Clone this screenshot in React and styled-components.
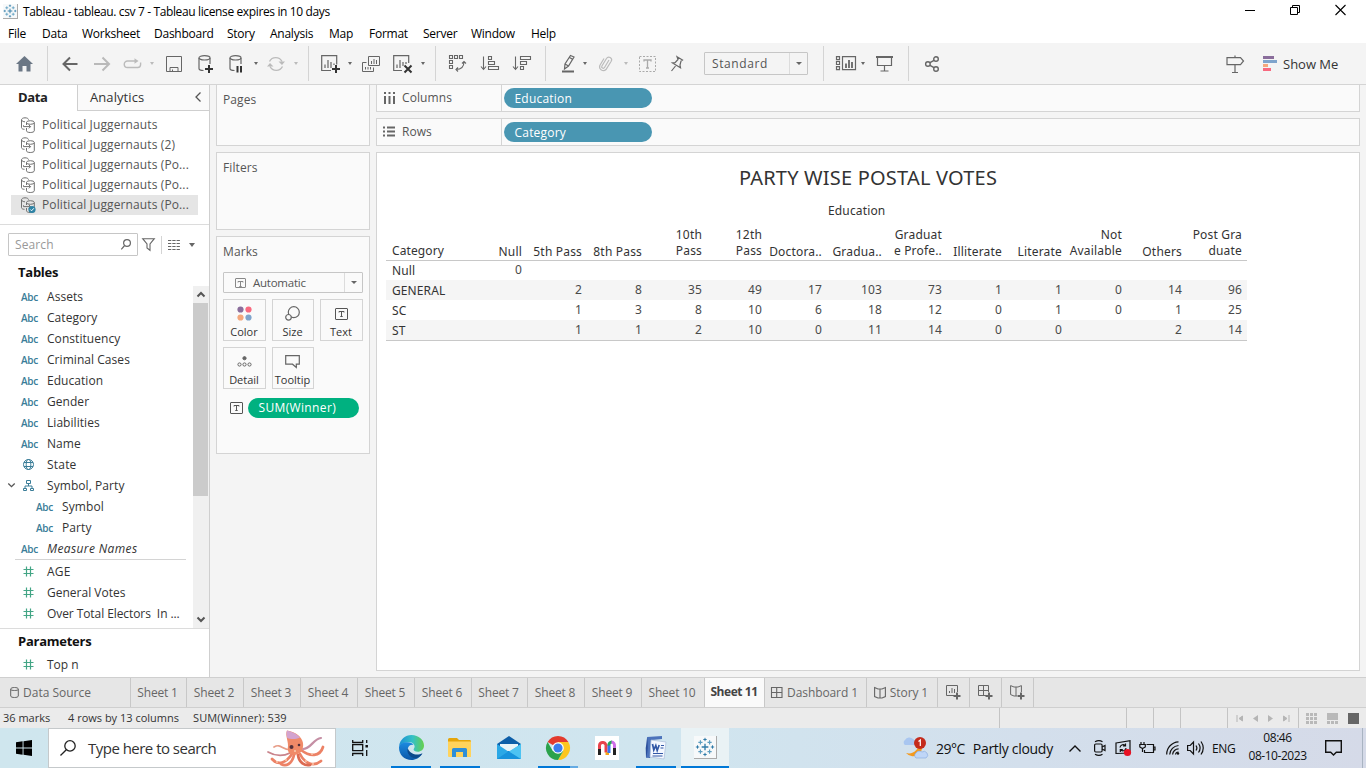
import React from "react";
import styled, { createGlobalStyle } from "styled-components";

const Global = createGlobalStyle`
  *, *::before, *::after { box-sizing: border-box; }
  html, body { margin: 0; padding: 0; width: 1366px; height: 768px; overflow: hidden; background: #fff; }
  body { font-family: "Open Sans", "Noto Sans", sans-serif; font-size: 12px; color: #333; }
  svg { display: block; flex: none; overflow: visible; }
`;

/* ---------- shared ---------- */
const Screen = styled.div`
  width: 1366px;
  height: 768px;
  display: flex;
  flex-direction: column;
  background: #fff;
`;
const Label = styled.span`
  white-space: pre;
  flex: none;
  letter-spacing: ${(p) => p.$ls || 0}px;
`;
const Slot = styled.span`
  flex: none;
  display: flex;
  align-items: center;
  margin-left: ${(p) => p.$gap || 0}px;
`;
const Caret = styled.i`
  flex: none;
  width: 0;
  height: 0;
  border: ${(p) => p.$s || 2.5}px solid transparent;
  border-bottom-width: 0;
  border-top: ${(p) => (p.$s || 2.5) + 0.5}px solid ${(p) => p.$c || "#666"};
  margin-left: ${(p) => p.$gap || 0}px;
`;
const Icon = ({ w = 16, h = 16, c = "#666", sw = 1.2, fill = "none", children }) => (
  <svg width={w} height={h} viewBox={`0 0 ${w} ${h}`} fill={fill} stroke={c} strokeWidth={sw}>
    {children}
  </svg>
);

/* ---------- window bars ---------- */
const TitleBar = styled.header`
  height: 23px;
  flex: none;
  display: flex;
  align-items: center;
  padding: 0 20px 0 3px;
  color: #000;
`;
const TitleText = styled(Label)`
  margin-left: 5px;
  flex: 1;
`;
const WindowButtons = styled.div`
  display: flex;
  align-items: center;
  gap: 35px;
  margin-top: -3px;
`;
const MenuBar = styled.nav`
  height: 20px;
  flex: none;
  display: flex;
  align-items: center;
  padding-left: 8px;
  color: #000;
`;
const MenuItem = styled.span`
  width: ${(p) => p.$w}px;
  flex: none;
  letter-spacing: -0.25px;
`;
const Toolbar = styled.div`
  height: 42px;
  flex: none;
  display: flex;
  align-items: center;
  background: #f4f4f4;
  border-bottom: 1px solid #d4d4d4;
`;
const Separator = styled.i`
  width: 1px;
  height: 35px;
  flex: none;
  background: #d4d4d4;
  margin-left: ${(p) => p.$gap}px;
`;
const Select = styled.div`
  width: ${(p) => p.$w}px;
  height: ${(p) => p.$h}px;
  margin-left: ${(p) => p.$gap || 0}px;
  flex: none;
  display: flex;
  align-items: center;
  background: ${(p) => p.$bg || "#f4f4f4"};
  border: 1px solid #c6c6c6;
  border-radius: 1px;
  color: #555;
`;
const SelectValue = styled.span`
  flex: 1;
  display: flex;
  align-items: center;
  gap: 7px;
  padding-left: ${(p) => p.$pad}px;
  letter-spacing: ${(p) => p.$ls || 0}px;
`;
const SelectArrow = styled.span`
  width: 18px;
  align-self: stretch;
  display: flex;
  align-items: center;
  justify-content: center;
  border-left: 1px solid #dcdcdc;
`;

const TableauMark = ({ size = 15 }) => (
  <svg width={size} height={size} viewBox="0 0 24 24" stroke="#2f7ba8" strokeWidth="1.4" fill="none">
    <path d="M12 8v8M8 12h8" strokeWidth="1.6" />
    <path d="M12 1v4M10 3h4M12 19v4M10 21h4M3 10v4M1 12h4M21 10v4M19 12h4" strokeWidth="1.2" />
    <path d="M6.500 4v5M4 6.500h5M17.500 4v5M15 6.500h5M6.500 15v5M4 17.500h5M17.500 15v5M15 17.500h5" stroke="#5b9dc0" />
  </svg>
);
const AppMark = styled.span`
  width: ${(p) => p.$s}px;
  height: ${(p) => p.$s}px;
  display: flex;
  align-items: center;
  justify-content: center;
  background: #f7f9fa;
  border-right: 1px solid #aaa;
  border-bottom: 1px solid #aaa;
`;

const TextMark = ({ w = 13, h = 12, c = "#555" }) => (
  <Icon w={w} h={h} c={c} sw={1}>
    <rect x=".5" y=".5" width={w - 1} height={h - 1} rx=".5" />
    <path d={`M${w / 2 - 2.5} 4.5v-1h5v1M${w / 2} 3.5v5M${w / 2 - 1.2} 8.5h2.4`} />
  </Icon>
);

/* ---------- left data pane ---------- */
const Body = styled.main`
  height: 592px;
  flex: none;
  display: flex;
  background: #f4f4f4;
`;
const DataPane = styled.aside`
  width: 210px;
  flex: none;
  display: flex;
  flex-direction: column;
  background: #fff;
  border-right: 1px solid #cfcfcf;
`;
const PaneTabs = styled.div`
  height: 26px;
  flex: none;
  display: flex;
  font-size: 13px;
`;
const DataTab = styled.div`
  width: 77px;
  padding: 3px 0 0 18px;
  font-weight: 700;
  color: #222;
  letter-spacing: -0.4px;
`;
const AnalyticsTab = styled.div`
  flex: 1;
  display: flex;
  align-items: center;
  justify-content: space-between;
  padding: 0 8px 2px 12px;
  background: #fafafa;
  border-left: 1px solid #cfcfcf;
  border-bottom: 1px solid #cfcfcf;
  color: #333;
`;
const Sources = styled.div`
  height: 114px;
  flex: none;
  padding: 4px 11px 0;
  border-bottom: 1px solid #dcdcdc;
`;
const Source = styled.div`
  height: 20px;
  display: flex;
  align-items: center;
  gap: 6px;
  padding: 0 0 1px 9px;
  color: #555;
  background: ${(p) => (p.$on ? "#e5e5e5" : "transparent")};
`;
const SearchRow = styled.div`
  height: 39px;
  flex: none;
  display: flex;
  align-items: center;
  padding-left: 8px;
`;
const SearchField = styled.div`
  width: 130px;
  height: 23px;
  flex: none;
  display: flex;
  align-items: center;
  justify-content: space-between;
  padding: 0 6px;
  border: 1px solid #c6c6c6;
  border-radius: 1px;
  color: #999;
`;
const SearchRule = styled.i`
  width: 1px;
  height: 18px;
  flex: none;
  margin-left: 6px;
  background: #d4d4d4;
`;
const SectionTitle = styled.h3`
  margin: 0;
  height: ${(p) => p.$h}px;
  flex: none;
  padding: ${(p) => p.$pt}px 0 0 18px;
  font-size: 13px;
  line-height: 16px;
  font-weight: 700;
  color: #111;
  letter-spacing: -0.25px;
`;
const FieldArea = styled.div`
  height: 343px;
  flex: none;
  display: flex;
  border-bottom: 1px solid #dcdcdc;
`;
const FieldList = styled.div`
  flex: 1;
`;
const Field = styled.div`
  height: 21px;
  display: flex;
  align-items: center;
  padding: 0 0 1px ${(p) => (p.$nested ? 15 : 0)}px;
  color: #333;
  font-style: ${(p) => (p.$italic ? "italic" : "normal")};
`;
const FieldType = styled.span`
  width: 47px;
  flex: none;
  display: flex;
  align-items: center;
  padding: 1px 0 0 ${(p) => p.$pad}px;
  font-size: 10px;
  font-weight: 600;
  font-style: normal;
  letter-spacing: -0.3px;
  color: #3a7d98;
`;
const FieldRule = styled.i`
  display: block;
  height: 1px;
  margin: 0 7px 1px 15px;
  background: #d4d4d4;
`;
const ScrollTrack = styled.div`
  width: 16px;
  display: flex;
  flex-direction: column;
  align-items: center;
  background: #f0f0f0;
  padding-right: 1px;
`;
const ScrollEnd = styled.span`
  height: 17px;
  display: flex;
  align-items: center;
`;
const ScrollThumb = styled.span`
  width: 15px;
  height: 193px;
  background: #cbcbcb;
  margin-bottom: 115px;
`;

const SourceIcon = ({ on }) => (
  <Icon w={16} h={16} c="#707070" sw={1}>
    <path d="M4.5 12.3C2.6 12.3 1.5 11.5 1.5 10.6V2.8C1.5 1.7 3 .8 5 .8s3.5.8 3.5 1.8M1.5 3C2 4.2 3.5 4.8 5 4.8" />
    <path d="M6.5 11v2.8c0 1 1.6 1.7 3.8 1.7s4-.7 4-1.7V5.7M6.5 8V5.7" />
    <ellipse cx="10.4" cy="5.5" rx="3.9" ry="1.8" />
    <path d="M3.5 8.3v1.3h7M8.8 7.8l1.8 1.8-1.8 1.8" />
    {on && <circle cx="12" cy="12.5" r="3.6" fill="#2e83a5" stroke="none" />}
    {on && <path d="M10.3 12.5l1.3 1.3 2.2-2.5" stroke="#fff" />}
  </Icon>
);
const Hash = () => (
  <Icon w={11} h={11} c="#43a585" sw={1.2}>
    <path d="M3.5 .5v10M7.5 .5v10M.5 3.5h10M.5 7.5h10" />
  </Icon>
);
const Globe = () => (
  <Icon w={11} h={11} c="#3a7d98" sw={1}>
    <circle cx="5.5" cy="5.5" r="5" />
    <ellipse cx="5.5" cy="5.5" rx="2.3" ry="5" />
    <path d="M1 3.5h9M1 7.5h9" />
  </Icon>
);
const Hierarchy = () => (
  <Icon w={11} h={11} c="#3a7d98" sw={1}>
    <path d="M3.5 .5h4v3h-4zM.5 8.5h3v2h-3zM7.5 8.5h3v2h-3zM5.5 3.5v2.5M2 8.500V6h7v2.500" />
  </Icon>
);
const Chevron = ({ d, w = 8, h = 8, sw = 1.3 }) => (
  <Icon w={w} h={h} sw={sw} c="#555"><path d={d} /></Icon>
);

/* ---------- cards ---------- */
const Cards = styled.section`
  width: 154px;
  margin-left: 6px;
  flex: none;
  display: flex;
  flex-direction: column;
  gap: 6px;
  margin-top: -1px;
`;
const Card = styled.div`
  height: ${(p) => p.$h}px;
  padding: 7px 6px 0;
  background: #fafafa;
  border: 1px solid #d4d4d4;
  color: #555;
  line-height: 16px;
  letter-spacing: 0.1px;
`;
const MarksSelect = styled.div`
  margin-top: 12px;
  font-size: 11.5px;
`;
const MarkGrid = styled.div`
  display: grid;
  grid-template-columns: 43px 42px 43px;
  grid-auto-rows: 42px;
  column-gap: 6px;
  row-gap: 6px;
  margin-top: 6px;
`;
const MarkButton = styled.div`
  display: flex;
  flex-direction: column;
  align-items: center;
  justify-content: space-between;
  padding: 6px 1px 0 0;
  border: 1px solid #d4d4d4;
  font-size: 11px;
  letter-spacing: 0;
  color: #333;
  white-space: nowrap;
`;
const MarkGlyph = styled.span`
  height: 15px;
  display: flex;
  align-items: center;
`;
const MarkPillRow = styled.div`
  display: flex;
  align-items: center;
  gap: 5px;
  margin: 9px 0 0 7px;
`;
const Pill = styled.span`
  width: ${(p) => p.$w}px;
  height: 20px;
  display: flex;
  align-items: center;
  padding-left: 10.5px;
  border-radius: 10px;
  background: ${(p) => (p.$green ? "#00b180" : "#4996b2")};
  color: #fff;
  font-weight: 500;
  letter-spacing: ${(p) => p.$ls || 0}px;
`;

/* ---------- shelves & view ---------- */
const Work = styled.section`
  width: 984px;
  margin: -1px 0 0 6px;
  flex: none;
  display: flex;
  flex-direction: column;
  gap: 6px;
`;
const Shelf = styled.div`
  height: 28px;
  flex: none;
  display: flex;
  align-items: center;
  background: #fafafa;
  border: 1px solid #d4d4d4;
  color: #555;
`;
const ShelfName = styled.div`
  width: 125px;
  align-self: stretch;
  display: flex;
  align-items: center;
  gap: 7px;
  padding: 0 0 1px 6px;
  margin-right: 2px;
  border-right: 1px solid #d4d4d4;
`;
const View = styled.div`
  height: 519px;
  flex: none;
  background: #fff;
  border: 1px solid #d4d4d4;
  padding: 11px 0 0 9px;
  font-family: "Noto Sans", "Open Sans", sans-serif;
`;
const ViewTitle = styled.h1`
  margin: 0;
  height: 28px;
  line-height: 28px;
  padding-right: 9px;
  text-align: center;
  font-size: 20px;
  font-weight: 400;
  letter-spacing: 0.2px;
  color: #333;
`;
const ViewCaption = styled.div`
  height: 16px;
  margin-top: 11px;
  padding-left: 442px;
  line-height: 16px;
  letter-spacing: 0.15px;
`;
const Crosstab = styled.div`
  width: 861px;
  margin-top: 7px;
  border-bottom: 1px solid #c8c8c8;
`;
const CrossRow = styled.div`
  display: grid;
  grid-template-columns: 80px repeat(13, 60px);
  align-items: end;
  height: ${(p) => p.$h}px;
  background: ${(p) => (p.$band ? "#f5f5f5" : "transparent")};
  border-bottom: ${(p) => (p.$head ? "1px solid #c8c8c8" : "0")};
`;
const RowName = styled.span`
  padding-left: 6px;
  line-height: 18px;
  letter-spacing: 0.1px;
`;
const HeadCell = styled.span`
  padding: 0 4px ${(p) => (p.$two ? 1 : 0)}px 0;
  text-align: right;
  white-space: pre;
  line-height: ${(p) => (p.$two ? 16 : 17)}px;
  letter-spacing: 0.18px;
`;
const NumCell = styled.span`
  padding: 0 4px 1px 0;
  text-align: right;
  line-height: 18px;
  letter-spacing: 0.15px;
  color: #4a4a4a;
`;

/* ---------- bottom bars ---------- */
const SheetTabs = styled.div`
  height: 31px;
  flex: none;
  display: flex;
  background: #e6e6e6;
  border-top: 1px solid #cfcfcf;
  border-bottom: 1px solid #cfcfcf;
`;
const SheetTab = styled.div`
  width: ${(p) => p.$w}px;
  flex: none;
  display: flex;
  align-items: center;
  justify-content: ${(p) => (p.$left ? "flex-start" : "center")};
  gap: 4px;
  padding: ${(p) => (p.$on ? "0 1px 3px 0" : p.$left ? "0 0 0 10px" : "0 2px 0 0")};
  border-right: 1px solid #c8c8c8;
  background: ${(p) => (p.$on ? "#fafafa" : "transparent")};
  color: ${(p) => (p.$on ? "#444" : "#666")};
  font-weight: ${(p) => (p.$on ? 700 : 400)};
  letter-spacing: ${(p) => (p.$on ? -0.45 : p.$ls || -0.2)}px;
  white-space: nowrap;
`;
const StatusBar = styled.div`
  height: 20px;
  flex: none;
  display: flex;
  align-items: center;
  padding-left: 3px;
  background: #ebebeb;
  color: #333;
  font-size: 11px;
`;
const StatusText = styled.span`
  width: ${(p) => p.$w}px;
  flex: none;
  padding-bottom: 2px;
  white-space: nowrap;
  letter-spacing: ${(p) => p.$ls || 0}px;
`;
const StatusCell = styled.span`
  width: ${(p) => p.$w}px;
  flex: none;
  align-self: stretch;
  display: flex;
  align-items: center;
  justify-content: center;
  gap: ${(p) => p.$gap || 0}px;
  border-left: 1px solid #c4c4c4;
`;
const Taskbar = styled.footer`
  height: 40px;
  flex: none;
  display: flex;
  align-items: center;
  background: linear-gradient(90deg, #cfe6ee 0%, #d0e5ef 50%, #d3dfec 75%, #d5dae8 100%);
  color: #111;
`;
const StartButton = styled.div`
  width: 48px;
  flex: none;
  display: flex;
  justify-content: center;
`;
const TaskSearch = styled.div`
  width: 288px;
  height: 40px;
  flex: none;
  display: flex;
  align-items: center;
  padding-left: 11px;
  background: #fff;
  border: 1px solid #c5c9cb;
  font-size: 15px;
  color: #333;
`;
const openEdge = (p) => (p.$multi ? "linear-gradient(90deg, #0078d7 80%, #65abe3 80%)" : "linear-gradient(#0078d7, #0078d7)");
const TaskItem = styled.div`
  width: ${(p) => p.$w || 40}px;
  height: 40px;
  margin-left: ${(p) => p.$gap || 0}px;
  flex: none;
  display: flex;
  align-items: center;
  justify-content: center;
  background-color: ${(p) => (p.$on ? "#e9f2f5" : "transparent")};
  background-image: ${(p) => (p.$open ? openEdge(p) : "none")};
  background-size: 100% 2px;
  background-position: bottom;
  background-repeat: no-repeat;
  padding-bottom: 1px;
`;
const Weather = styled.div`
  display: flex;
  align-items: center;
  margin-left: 173px;
  width: 165px;
  flex: none;
  font-size: 14px;
  gap: 8px;
`;
const Tray = styled.div`
  flex: none;
  display: flex;
  align-items: center;
`;
const Clock = styled.div`
  width: 60px;
  margin: -2px 0 0 12px;
  text-align: center;
  line-height: 18px;
  white-space: nowrap;
  letter-spacing: -0.45px;
`;
const PeekEdge = styled.i`
  width: 1px;
  height: 40px;
  margin-left: 20px;
  background: #a9b4c2;
`;

const menus = [["File", 34], ["Data", 40], ["Worksheet", 72], ["Dashboard", 73], ["Story", 43], ["Analysis", 59], ["Map", 40], ["Format", 54], ["Server", 48], ["Window", 60], ["Help", 40]];
const sources = ["Political Juggernauts", "Political Juggernauts (2)", "Political Juggernauts (Po...", "Political Juggernauts (Po...", "Political Juggernauts (Po..."];
const dims = ["Assets", "Category", "Constituency", "Criminal Cases", "Education", "Gender", "Liabilities", "Name"];
const measures = [["AGE", 0.2], ["General Votes", 0], ["Over Total Electors  In ...", -0.08]];
const heads = ["Null", "5th Pass", "8th Pass", "10th\nPass", "12th\nPass", "Doctora..", "Gradua..", "Graduat\ne Profe..", "Illiterate", "Literate", "Not\nAvailable", "Others", "Post Gra\nduate"];
const rows = [
  ["Null", 0, "", "", "", "", "", "", "", "", "", "", "", ""],
  ["GENERAL", "", 2, 8, 35, 49, 17, 103, 73, 1, 1, 0, 14, 96],
  ["SC", "", 1, 3, 8, 10, 6, 18, 12, 0, 1, 0, 1, 25],
  ["ST", "", 1, 1, 2, 10, 0, 11, 14, 0, 0, "", 2, 14],
];
const sheets = [["Sheet 1", 56], ["Sheet 2", 57], ["Sheet 3", 57], ["Sheet 4", 57], ["Sheet 5", 57], ["Sheet 6", 57], ["Sheet 7", 56], ["Sheet 8", 57], ["Sheet 9", 57], ["Sheet 10", 63]];

function ToolbarRow() {
  return (
    <Toolbar>
      <Slot $gap={16}>
        <Icon w={17} h={16} c="none" fill="#6b7785"><path d="M8.500 0L17 8h-2.500v7.500H10.500V10h-4v5.500H2.500V8H0z" /></Icon>
      </Slot>
      <Separator $gap={14} />
      <Slot $gap={14}><Icon w={17} h={16} sw={2}><path d="M15.500 8H1.500M8 1.500L1.500 8L8 14.500" /></Icon></Slot>
      <Slot $gap={15}><Icon w={17} h={16} c="#b9b9b9" sw={2}><path d="M0 8h15M8.500 1.500L15 8l-6.500 6.500" /></Icon></Slot>
      <Slot $gap={12}><Icon w={19} h={10} c="#bbb" sw={1.4}><path d="M12 2H4.500a3.200 3.200 0 000 6.500h10.200a2.900 2.900 0 002.900-2.900V3.500" /><path d="M11.500-.8L15.500 2l-4 2.800z" fill="#bbb" stroke="none" /></Icon></Slot>
      <Caret $gap={8} $c="#bbb" />
      <Slot $gap={12}><Icon w={16} h={16} sw={1}><path d="M.5.5h15v15H.5zM4 15.500v-4h8v4M6.500 15.500v-2" /></Icon></Slot>
      <Slot $gap={16}><Icon w={16} h={18}><ellipse cx="6.500" cy="2.800" rx="5.500" ry="2.200" /><path d="M1 3v10.500c0 1.200 2 2 4.500 2M12 3v6" /><path d="M7 14h8M11 10v8" stroke="#333" strokeWidth="2" /></Icon></Slot>
      <Slot $gap={15}><Icon w={15} h={18}><ellipse cx="6.500" cy="2.800" rx="5.500" ry="2.200" /><path d="M1 3v10.500c0 1.200 2 2 4.500 2M12 3v6" /><path d="M8.500 11v6.500M12 11v6.500" stroke="#333" strokeWidth="2" /></Icon></Slot>
      <Caret $gap={10} />
      <Slot $gap={9}><Icon w={18} h={16} c="#bbb" sw={1.4}><path d="M2.500 5.500a7 7 0 0112.500 0M15.500 10.500a7 7 0 01-12.500 0" /><path d="M11.500 5.500h6.500l-3 3.500zM0 10.500h6.500L3 7z" fill="#bbb" stroke="none" /></Icon></Slot>
      <Caret $gap={9} $c="#bbb" />
      <Separator $gap={10} />
      <Slot $gap={12}><Icon w={19} h={18}><path d="M10 15.500H.7V.7h15V9.500M4 13V9.500M7 13V5M10 13V7M13 10V8.500" /><path d="M11 14h8M15 10v8" stroke="#333" strokeWidth="2" /></Icon></Slot>
      <Caret $gap={8} />
      <Slot $gap={10}><Icon w={18} h={16} sw={1}><path d="M6.500.5h11v9h-11zM4.500 6.500h-4v9h11v-4M9.500 8V5M12 8V3M14.500 8V4M3.500 13.500V11M6 13.500V11M8.500 13.500V11" /></Icon></Slot>
      <Slot $gap={13}><Icon w={19} h={18}><path d="M9 15.500H.7V.7h15V8M4 13V9.500M7 13V5M10 11V7M13 9V7" /><path d="M11.500 10.500l7 7M18.500 10.500l-7 7" stroke="#333" strokeWidth="2" /></Icon></Slot>
      <Caret $gap={9} />
      <Separator $gap={10} />
      <Slot $gap={13}><Icon w={17} h={17} sw={1.1}><path d="M.5.5h3v3h-3zM5.500.5h3v3h-3zM10.500.5h3v3h-3zM.5 5.500h3v3h-3zM.5 10.500h3v3h-3zM15 6.500c0 5-3 8-8 8M13 8.500l2-2 2 2M9 12.500l-2 2 2 2" /></Icon></Slot>
      <Slot $gap={15}><Icon w={18} h={15} sw={1.1}><path d="M2.500.5V13M0 10.500l2.500 3 2.500-3M7.500.5h3v3h-3zM7.500 5.500h6v3h-6zM7.500 10.500h10v3h-10z" /></Icon></Slot>
      <Slot $gap={14}><Icon w={18} h={15} sw={1.1}><path d="M2.500.5V13M0 10.500l2.500 3 2.500-3M7.500 10.500h3v3h-3zM7.500 5.500h6v3h-6zM7.500.5h10v3h-10z" /></Icon></Slot>
      <Separator $gap={14} />
      <Slot $gap={16}><Icon w={13} h={18}><path d="M8.500 0.500L12 2L6.500 11l-4 3L3 9z M3 9l3.500 2M7.500 2.500L11 4.500" /><path d="M0 16.500h12" strokeWidth="2" /></Icon></Slot>
      <Caret $gap={8} />
      <Slot $gap={12}><Icon w={14} h={16} c="#bbb"><path d="M10 4L5.500 11.500a1.500 1.500 0 01-2.600-1.500L7.500 2.500a2.700 2.700 0 014.700 2.700L7 13.500A3.800 3.800 0 01.8 9.500L5 2.500" /></Icon></Slot>
      <Caret $gap={11} $c="#bbb" />
      <Slot $gap={11}><Icon w={17} h={16} c="#aaa" sw={1}><rect x=".5" y=".5" width="16" height="15" strokeDasharray="2 1.500" /><path d="M5 5.500v-1.500h7v1.500M8.500 4v8M7 12h3" strokeWidth="1.300" /></Icon></Slot>
      <Slot $gap={14}><Icon w={14} h={16}><path d="M7 .7l5.500 3.300-1.500 1-1 4 .5 2.700-8-4.700 2.500-.3 3-3.200zM5.500 10l-4 5" /></Icon></Slot>
      <Select $w={104} $h={23} $gap={20}>
        <SelectValue $pad={7} $ls={0.6}>Standard</SelectValue>
        <SelectArrow><Caret $s={3} /></SelectArrow>
      </Select>
      <Separator $gap={15} />
      <Slot $gap={12}><Icon w={20} h={15}><path d="M.5.7h3v3h-3zM.5 5.500h3v3h-3zM.5 10.700h3v3h-3zM6.500.7h13v13h-13z" /><path d="M10 12V7.500M13 12V4M16 12V6" strokeWidth="1.800" /></Icon></Slot>
      <Caret $gap={5} />
      <Slot $gap={11}><Icon w={17} h={16}><path d="M0 1h17" strokeWidth="2" /><path d="M1.500 1v8.500h14V1M8.500 9.500v5.500M4.500 15h8" /></Icon></Slot>
      <Separator $gap={15} />
      <Slot $gap={16}><Icon w={14} h={16} sw={1.4}><circle cx="2.900" cy="8" r="2.300" /><circle cx="11" cy="3" r="2.300" /><circle cx="11" cy="13" r="2.300" /><path d="M5 6.700L9 4.300M5 9.300l4 2.400" /></Icon></Slot>
      <Slot $gap={287}><Icon w={18} h={18}><path d="M1 2.700h13.500L17.500 6l-3 3.700H1zM9 .5v2M9 9.700v7.800M6 17.500h6" /></Icon></Slot>
      <Slot $gap={19}>
        <Icon w={15} h={15} c="none"><path d="M0 0h11v3H0z" fill="#8a6d9b" /><path d="M0 4h14v3H0z" fill="#7fa4cc" /><path d="M0 8h5v3H0z" fill="#f4a77c" /><path d="M0 12h8v3H0z" fill="#f8697f" /></Icon>
      </Slot>
      <Slot $gap={5}><ShowMe>Show Me</ShowMe></Slot>
    </Toolbar>
  );
}
const ShowMe = styled.span`
  font-size: 13px;
  color: #333;
  white-space: nowrap;
`;

function DataPaneView() {
  return (
    <DataPane>
      <PaneTabs>
        <DataTab>Data</DataTab>
        <AnalyticsTab><Label $ls={0.08}>Analytics</Label><Chevron w={6} h={10} d="M5.500.5L1 5l4.500 4.500" /></AnalyticsTab>
      </PaneTabs>
      <Sources>
        {sources.map((s, i) => (
          <Source key={i} $on={i === 4}><SourceIcon on={i === 4} /><Label $ls={0.12}>{s}</Label></Source>
        ))}
      </Sources>
      <SearchRow>
        <SearchField><Label $ls={0.1}>Search</Label><Icon w={10} h={11}><circle cx="6" cy="4" r="3.400" /><path d="M3.600 6.500L.3 10.300" /></Icon></SearchField>
        <Slot $gap={4}><Icon w={13} h={13} sw={1.1}><path d="M.7.7h11.600L8 6v6.300L5 10V6z" /></Icon></Slot>
        <SearchRule />
        <Slot $gap={6}><Icon w={12} h={10} sw={1}><path d="M0 .5h12M0 3.500h12M0 6.500h12M0 9.500h12" strokeDasharray="3.300 1" /></Icon></Slot>
        <Caret $gap={9} $s={3.5} />
      </SearchRow>
      <SectionTitle $h={22} $pt={0}>Tables</SectionTitle>
      <FieldArea>
        <FieldList>
          {dims.map((d) => (
            <Field key={d}><FieldType $pad={21}>Abc</FieldType><Label $ls={0.05}>{d}</Label></Field>
          ))}
          <Field><FieldType $pad={23}><Globe /></FieldType><Label $ls={0.2}>State</Label></Field>
          <Field><FieldType $pad={8}><Chevron w={7} h={5} d="M.3.5l3.200 3.200L6.700.5" /><Slot $gap={8}><Hierarchy /></Slot></FieldType><Label $ls={0.07}>Symbol, Party</Label></Field>
          <Field $nested><FieldType $pad={21}>Abc</FieldType><Label $ls={0.1}>Symbol</Label></Field>
          <Field $nested><FieldType $pad={21}>Abc</FieldType><Label $ls={0.1}>Party</Label></Field>
          <Field $italic><FieldType $pad={21}>Abc</FieldType><Label $ls={0.38}>Measure Names</Label></Field>
          <FieldRule />
          {measures.map(([d, ls]) => (
            <Field key={d}><FieldType $pad={23}><Hash /></FieldType><Label $ls={ls}>{d}</Label></Field>
          ))}
        </FieldList>
        <ScrollTrack>
          <ScrollEnd><Chevron w={8} h={5} sw={2} d="M.5 4.500L4 1l3.500 3.500" /></ScrollEnd>
          <ScrollThumb />
          <ScrollEnd><Chevron w={8} h={5} sw={2} d="M.5.5L4 4l3.500-3.500" /></ScrollEnd>
        </ScrollTrack>
      </FieldArea>
      <SectionTitle $h={25} $pt={4}>Parameters</SectionTitle>
      <Field><FieldType $pad={23}><Hash /></FieldType><Label>Top n</Label></Field>
    </DataPane>
  );
}

function CardsView() {
  return (
    <Cards>
      <Card $h={62}>Pages</Card>
      <Card $h={78}>Filters</Card>
      <Card $h={218}>
        Marks
        <MarksSelect>
          <Select $w={140} $h={21} $bg="#fafafa">
            <SelectValue $pad={11} $ls={-0.25}><TextMark w={11} h={10} c="#888" />Automatic</SelectValue>
            <SelectArrow><Caret $s={3} /></SelectArrow>
          </Select>
        </MarksSelect>
        <MarkGrid>
          <MarkButton><MarkGlyph><Icon w={15} h={15} c="none"><circle cx="3.500" cy="3.500" r="3.100" fill="#8a6d9b" /><circle cx="11.500" cy="3.500" r="3.100" fill="#f8697f" /><circle cx="3.500" cy="11.500" r="3.100" fill="#f4a77c" /><circle cx="11.500" cy="11.500" r="3.100" fill="#7fa4cc" /></Icon></MarkGlyph>Color</MarkButton>
          <MarkButton><MarkGlyph><Icon w={15} h={15}><circle cx="8.800" cy="6.200" r="5.500" /><circle cx="3.500" cy="11.300" r="2.800" fill="#fafafa" /></Icon></MarkGlyph>Size</MarkButton>
          <MarkButton><MarkGlyph><TextMark /></MarkGlyph>Text</MarkButton>
          <MarkButton><MarkGlyph><Icon w={15} h={11} sw={1}><circle cx="7.500" cy="2.200" r="1.600" fill="#666" /><circle cx="2.500" cy="8.500" r="1.600" /><circle cx="7.500" cy="8.500" r="1.600" /><circle cx="12.500" cy="8.500" r="1.600" /></Icon></MarkGlyph>Detail</MarkButton>
          <MarkButton><MarkGlyph><Icon w={15} h={13}><path d="M.7.7h13.600v8.500h-3v3.300L7.500 9.200H.7z" /></Icon></MarkGlyph>Tooltip</MarkButton>
        </MarkGrid>
        <MarkPillRow><TextMark /><Pill $w={111} $green $ls={0.35}>SUM(Winner)</Pill></MarkPillRow>
      </Card>
    </Cards>
  );
}

function WorkView() {
  return (
    <Work>
      <Shelf>
        <ShelfName><Icon w={12} h={12} sw={2}><path d="M2 4v8M6.500 4v8M11 4v8M2 0v2M6.500 0v2M11 0v2" /></Icon><Label $ls={0.1}>Columns</Label></ShelfName>
        <Pill $w={148} $ls={0.2}>Education</Pill>
      </Shelf>
      <Shelf>
        <ShelfName><Icon w={12} h={11} sw={2}><path d="M4 1.500h8M4 5.500h8M4 9.500h8M0 1.500h2M0 5.500h2M0 9.500h2" /></Icon><Label>Rows</Label></ShelfName>
        <Pill $w={148} $ls={0.2}>Category</Pill>
      </Shelf>
      <View>
        <ViewTitle>PARTY WISE POSTAL VOTES</ViewTitle>
        <ViewCaption>Education</ViewCaption>
        <Crosstab>
          <CrossRow $head $h={35}>
            <RowName>Category</RowName>
            {heads.map((h) => <HeadCell key={h} $two={h.includes("\n")}>{h}</HeadCell>)}
          </CrossRow>
          {rows.map((r, i) => (
            <CrossRow key={r[0]} $h={i ? 20 : 19} $band={i % 2 === 1}>
              <RowName>{r[0]}</RowName>
              {r.slice(1).map((n, j) => <NumCell key={j}>{n}</NumCell>)}
            </CrossRow>
          ))}
        </Crosstab>
      </View>
    </Work>
  );
}

function BottomBars() {
  return (
    <>
      <SheetTabs>
        <SheetTab $w={131} $left><Icon w={9} h={11} sw={1}><path d="M.7 2c0-2 7.600-2 7.600 0v7c0 2-7.600 2-7.600 0zM.7 2.500c0 1.300 7.600 1.300 7.600 0" /></Icon><Label>Data Source</Label></SheetTab>
        {sheets.map(([s, w]) => <SheetTab key={s} $w={w}>{s}</SheetTab>)}
        <SheetTab $w={60} $on>Sheet 11</SheetTab>
        <SheetTab $w={102} $ls={-0.1}><Icon w={12} h={11} sw={1.1}><path d="M.5.5h10.500v10H.5zM5.700.5v10M.5 5.500h10.500" /></Icon>Dashboard 1</SheetTab>
        <SheetTab $w={71} $ls={-0.1}><Icon w={12} h={12} sw={1.1}><path d="M.6.6L4 2h4L11.400.6v9L8 11H4L.6 9.600zM6 2v9" /></Icon>Story 1</SheetTab>
        <SheetTab $w={32}><Icon w={14} h={15} sw={1}><path d="M8 10.500H.5v-10h11V7M3.500 8V6M6 8V3M8.500 8V4" /><path d="M7.500 11h7M11 7.500v7" strokeWidth="2" /></Icon></SheetTab>
        <SheetTab $w={32}><Icon w={14} h={15} sw={1}><path d="M8 10.500H.5v-10h10V7M5.500.5v10M.5 5.500h10" /><path d="M7.500 11h7M11 7.500v7" strokeWidth="2" /></Icon></SheetTab>
        <SheetTab $w={32}><Icon w={14} h={15} sw={1}><path d="M7 11H4L.6 9.600v-9L4 2h4L11.400.6V7M6 2v9" /><path d="M7.500 11h7M11 7.500v7" strokeWidth="2" /></Icon></SheetTab>
      </SheetTabs>
      <StatusBar>
        <StatusText $w={65}>36 marks</StatusText>
        <StatusText $w={125}>4 rows by 13 columns</StatusText>
        <StatusText $w={806} $ls={0.1}>SUM(Winner): 539</StatusText>
        <StatusCell $w={127} /><StatusCell $w={27} /><StatusCell $w={27} /><StatusCell $w={47} />
        <StatusCell $w={71} $gap={10}>
          <Icon w={7} h={7} c="#b5b5b5" fill="#b5b5b5" sw={1}><path d="M1 0v7M6.500 1v5L3 3.500z" /></Icon>
          <Icon w={5} h={7} c="none" fill="#b5b5b5"><path d="M5 0v7L0 3.500z" /></Icon>
          <Icon w={5} h={7} c="none" fill="#b5b5b5"><path d="M0 0v7l5-3.500z" /></Icon>
          <Icon w={7} h={7} c="#b5b5b5" fill="#b5b5b5" sw={1}><path d="M6 0v7M.5 1v5L4 3.500z" /></Icon>
        </StatusCell>
        <StatusCell $w={68} $gap={10}>
          <Icon w={11} h={11} c="#b9b9b9" sw={3}><path d="M0 1.500h11M0 5.500h11M0 9.500h11" strokeDasharray="3 1" /></Icon>
          <Icon w={11} h={11} c="none" fill="#b9b9b9"><path d="M0 0h11v7H0zM0 8h3v3H0zM4 8h3v3H4zM8 8h3v3H8z" /></Icon>
          <Icon w={11} h={11} c="none" fill="#666"><path d="M0 0h11v11H0z" /></Icon>
        </StatusCell>
      </StatusBar>
    </>
  );
}

const Octopus = () => (
  <svg width="58" height="37" viewBox="0 0 58 37" fill="none">
    <g stroke="#ec8266" strokeWidth="2.700" strokeLinecap="round">
      <path d="M23 23C15 27 8 26 1 22" stroke="#c9848c" strokeWidth="1.700" />
      <path d="M25 24C19 33 11 36 5 29" />
      <path d="M27 25C25 34 19 37 14 34" />
      <path d="M33 24C38 34 47 37 54 31" />
      <path d="M34 20C43 27 53 27 56 17" />
      <path d="M36 19C44 19 46 9 54 8" stroke="#c58fa4" strokeWidth="2.200" />
      <path d="M31 25C32 33 38 36 43 35" stroke="#dc6b52" />
      <path d="M24 20C15 20 14 13 7 17" stroke="#e79d88" strokeWidth="1.700" />
    </g>
    <path d="M20 .5C29 2 35 7 36 13C37 20 33 25 27 25C22 25 20 21 21 16C21 10 18 5 20 .5Z" fill="#f08a68" />
    <path d="M20 .5C26 2 30 4 33 7.500C28 10 23 9 20.300 8C19.300 5 19.300 3 20 .5Z" fill="#d3a3cf" />
    <circle cx="24.500" cy="17" r="2" fill="#54323c" /><circle cx="32" cy="15" r="1.300" fill="#54323c" />
    <g fill="#f9cdb0"><circle cx="10" cy="32" r=".9" /><circle cx="19" cy="30" r=".9" /><circle cx="39" cy="31" r=".9" /><circle cx="46" cy="34" r=".9" /><circle cx="45" cy="24" r=".9" /><circle cx="28" cy="21" r="1" /></g>
  </svg>
);
const Edge = () => (
  <svg width="25" height="25" viewBox="0 0 24 24">
    <defs>
      <linearGradient id="eg" x1="0" x2="1"><stop stopColor="#1b8fd6" /><stop offset=".55" stopColor="#35c1c5" /><stop offset="1" stopColor="#66d04b" /></linearGradient>
      <linearGradient id="eb" x1="0" x2="0" y2="1"><stop stopColor="#1c8be0" /><stop offset="1" stopColor="#0b57a8" /></linearGradient>
    </defs>
    <path d="M0 11C1 4 6 0 12 0c7 0 12 5 12 10 0 4-3 6-6 6-2.500 0-4-1-4-2 0-1 1-1.500 1-3 0-2-2-4-5-4C5 7 1 9 0 11z" fill="url(#eg)" />
    <path d="M0 12C0 9 4 6.800 8 7c3 0 5 1 6 2.500-3-.5-5 1-5.500 3.500C8 17 12 20 16 20c3 0 5-1 6-2-2 4-6 6-10 6C5 24 0 19 0 12z" fill="url(#eb)" />
    <path d="M8 14c0 6 5 9 9 8 3-1 5-3 5.500-4.500C18 20 11 19 8.500 13z" fill="#0c4a8c" />
  </svg>
);
const Chrome = () => (
  <svg width="24" height="24" viewBox="0 0 24 24">
    <path d="M12 12L1.600 6A12 12 0 0122.400 6H12z" fill="#e33b2e" />
    <path d="M12 12V6h10.400A12 12 0 0112 24l5.200-9z" fill="#fcc61e" />
    <path d="M12 12l5.200 3L12 24A12 12 0 011.600 6l5.200 9z" fill="#2ba24c" />
    <circle cx="12" cy="12" r="5.800" fill="#fff" /><circle cx="12" cy="12" r="4.600" fill="#3b7ded" />
  </svg>
);

function TaskbarRow() {
  return (
    <Taskbar>
      <StartButton><Icon w={16} h={16} c="none" fill="#000"><path d="M0 2.200l6.600-.9v6.200H0zM7.500 1.200L16 0v7.500H7.500zM0 8.500h6.600v6.200L0 13.800zM7.500 8.500H16V16l-8.500-1.200z" /></Icon></StartButton>
      <TaskSearch>
        <Icon w={16} h={16} c="#222" sw={1.3}><circle cx="10" cy="5.900" r="5.200" /><path d="M6.300 9.700L.5 15.500" /></Icon>
        <Slot $gap={12}><Label $ls={-0.52}>Type here to search</Label></Slot>
        <Slot $gap={51}><Octopus /></Slot>
      </TaskSearch>
      <TaskItem $w={30} $gap={9}><Icon w={17} h={16} c="#111" sw={1.3}><path d="M.7 0v2.500h10V0M.7 4.700h10v6h-10zM.7 16v-2.500h10V16M14.700 0v3M14.700 10v6" /><path d="M14.700 5v2.500" strokeWidth="2.500" /></Icon></TaskItem>
      <TaskItem $gap={16} $open><Edge /></TaskItem>
      <TaskItem $gap={9} $open>
        <Icon w={24} h={20} c="none"><path d="M0 1.500Q0 0 1.500 0H9l2 2h11q1 0 1 1.500V8H0z" fill="#e5a50a" /><path d="M0 3.500h23V19H1q-1 0-1-1z" fill="#ffd35c" /><path d="M4 19v-7.500q0-1.500 1.500-1.500h12q1.500 0 1.500 1.500V19h-4v-5H8v5z" fill="#2e8fd8" /></Icon>
      </TaskItem>
      <TaskItem $gap={9}>
        <Icon w={24} h={23} c="none"><path d="M0 8L12 0l12 8v15H0z" fill="#0d5ea8" /><path d="M3 8h18v7H3z" fill="#e8f3f8" /><path d="M0 8l12 8 12-8v15H0z" fill="#2aa8e6" /><path d="M0 23l12-8 12 8z" fill="#1793dc" /><path d="M24 8L12 15.500 24 23z" fill="#4dc3f2" /></Icon>
      </TaskItem>
      <TaskItem $gap={9} $open $multi><Chrome /></TaskItem>
      <TaskItem $gap={9}>
        <Icon w={24} h={24} c="none"><path d="M0 0h24v24H0z" fill="#fff" /><g fill="none" strokeWidth="3"><path d="M4.500 19V12" stroke="#222" /><path d="M4.500 13V9.500a3.200 3.200 0 016.200-1" stroke="#e8434c" /><path d="M11 8v8.500" stroke="#e8434c" /><path d="M10.500 17.500h3.500" stroke="#f6a51c" /><path d="M14 17V9" stroke="#3878ed" /><path d="M14 9.500a3 3 0 013-3.500" stroke="#26a65b" /><path d="M16.500 6a3.200 3.200 0 013 3.500V13" stroke="#cf6ee8" /><path d="M19.500 12v7" stroke="#222" /></g></Icon>
      </TaskItem>
      <TaskItem $gap={9} $open>
        <Icon w={24} h={24} c="none"><path d="M3 2Q1 12 2 21l4 1V2z" fill="#2b4f9c" /><path d="M3 1l15-1v3L8 4v17l-6 1Q5 12 3 1z" fill="#4c73bb" /><path d="M7 4l15 2-2 17-14-2z" fill="#f4f8ff" stroke="#a9bbd8" strokeWidth=".7" /><path d="M8.500 8l1.300 6 2-4.500 1.400 5 2-5.500" fill="none" stroke="#3157a6" strokeWidth="1.700" /><path d="M17 9.500h3M16.500 12h3M9 17.500h10M8.500 20h10" stroke="#3157a6" strokeWidth="1.200" /></Icon>
      </TaskItem>
      <TaskItem $w={48} $gap={5} $open $on><AppMark $s={23}><TableauMark size={20} /></AppMark></TaskItem>
      <Weather>
        <Icon w={26} h={25} c="none"><path d="M18 5a9 9 0 11-14 12c7 2 13-3 14-12z" fill="#f39a1f" /><path d="M3 9a3 3 0 010-5 5 5 0 018-1 4 4 0 012 6z" fill="#a9c6f0" /><path d="M14 22a3 3 0 010-5 4 4 0 016-1 3 3 0 014 6z" fill="#bfd6f7" stroke="#84a8dd" strokeWidth=".6" /><circle cx="18" cy="7" r="6" fill="#c42b1c" /><path d="M16.500 5.500L18.300 4v6" stroke="#fff" strokeWidth="1.200" fill="none" /></Icon>
        <Label $ls={-0.5}>29°C</Label>
        <Label $ls={-0.3}>Partly cloudy</Label>
      </Weather>
      <Tray>
        <Slot $gap={2}><Icon w={12} h={7} c="#111" sw={1.4}><path d="M.5 6.500L6 1l5.500 5.500" /></Icon></Slot>
        <Slot $gap={13}><Icon w={12} h={16} c="#111" sw={1.2}><rect x=".6" y="4" width="7.500" height="8" rx="1.200" /><path d="M8 7l3-1.500v5L8 9M1 1.800Q5 -.5 8.500 1.800M1 14.200Q5 16.500 8.500 14.200" /></Icon></Slot>
        <Slot $gap={9}><Icon w={17} h={16} c="#111" sw={1.2}><path d="M1 3l14-2.300V13L1 13.500z" /><path d="M5 7.500a3 3 0 015-2M10.500 3.500v2.500H8M11 8a3 3 0 01-5 2M5.300 12V9.500h2.500" /><circle cx="12.500" cy="12.500" r="3.600" fill="#e81123" stroke="none" /></Icon></Slot>
        <Slot $gap={7}><Icon w={17} h={12} c="#111" sw={1.2}><path d="M7.500 2.500h7v8h-9V8M14.500 5h1.500v3h-1.500M2 0v2.500M5 0v2.500M.8 2.500h5.500V5L3.500 6.500.8 5zM3.500 6.500V10" /></Icon></Slot>
        <Slot $gap={10}><Icon w={14} h={14} c="#111" sw={1.2}><path d="M.7 13.500A12.500 12.500 0 0112.500.8M3.700 13.500a9.500 9.500 0 018.800-9M6.600 13.500a6 6 0 016-5.700M9.500 13.500a3 3 0 013-2.500" /><circle cx="12" cy="12.500" r="1.200" fill="#111" stroke="none" /></Icon></Slot>
        <Slot $gap={7}><Icon w={17} h={14} c="#111" sw={1.2}><path d="M.6 4.500h2.600L6.500 1v12L3.200 9.500H.6zM9 4.500q1.800 2.500 0 5M11.500 2.500q3.200 4.500 0 9M14 .5q4.500 6.500 0 13" /></Icon></Slot>
        <Slot $gap={8}><Label $ls={-0.3}>ENG</Label></Slot>
        <Clock>08:46<br />08-10-2023</Clock>
        <Slot $gap={17}><Icon w={17} h={16} c="#111" sw={1.4}><path d="M.7.7h15.600v11.500h-5L8.500 15l-2.800-2.800h-5z" /></Icon></Slot>
        <PeekEdge />
      </Tray>
    </Taskbar>
  );
}

export default function App() {
  return (
    <>
      <Global />
      <Screen>
        <TitleBar>
          <AppMark $s={15}><TableauMark size={14} /></AppMark>
          <TitleText $ls={-0.37}>Tableau - tableau. csv 7 - Tableau license expires in 10 days</TitleText>
          <WindowButtons>
            <Icon w={10} h={10} c="#000" sw={1}><path d="M0 5.500h10" /></Icon>
            <Icon w={10} h={10} c="#000" sw={1}><path d="M.5 2.500h7v7h-7zM2.500 2.500v-2h7v7h-2" /></Icon>
            <Icon w={11} h={10} c="#000" sw={1.1}><path d="M.5 0l10 10M10.500 0l-10 10" /></Icon>
          </WindowButtons>
        </TitleBar>
        <MenuBar>{menus.map(([m, w]) => <MenuItem key={m} $w={w}>{m}</MenuItem>)}</MenuBar>
        <ToolbarRow />
        <Body>
          <DataPaneView />
          <CardsView />
          <WorkView />
        </Body>
        <BottomBars />
        <TaskbarRow />
      </Screen>
    </>
  );
}
